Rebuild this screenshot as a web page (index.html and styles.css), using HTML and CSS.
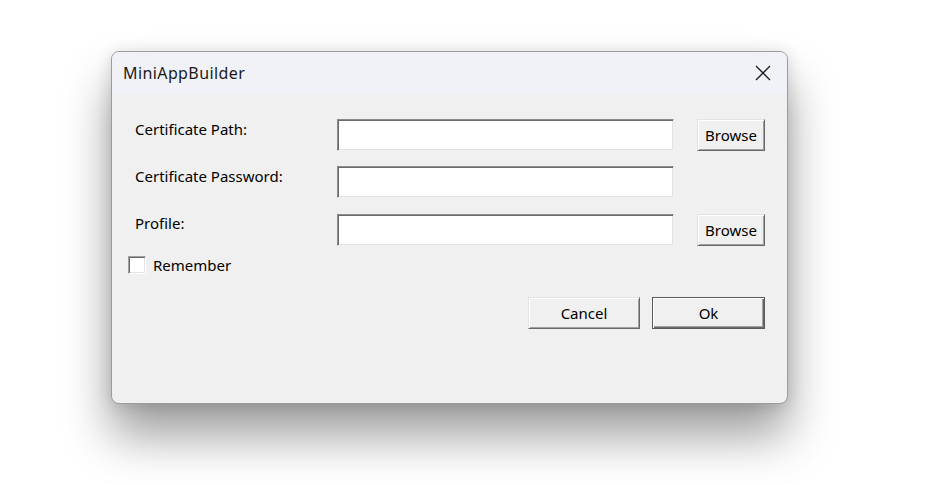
FILE: index.html
```html
<!DOCTYPE html>
<html>
<head>
<meta charset="utf-8">
<title>MiniAppBuilder</title>
<link rel="stylesheet" href="styles.css">
</head>
<body>
<div class="window">
  <div class="titlebar">
    <span class="title">MiniAppBuilder</span>
    <span class="close">
      <svg width="16" height="16" viewBox="0 0 16 16"><path d="M1 1 L15 15 M15 1 L1 15" stroke="#1a1a1a" stroke-width="1.3" fill="none"/></svg>
    </span>
  </div>
  <div class="content">
    <div class="form">
      <label class="lbl">Certificate Path:</label>
      <div class="field"></div>
      <button class="btn">Browse</button>

      <label class="lbl">Certificate Password:</label>
      <div class="field"></div>
      <div></div>

      <label class="lbl">Profile:</label>
      <div class="field third"></div>
      <button class="btn third">Browse</button>
    </div>
    <div class="check-row">
      <span class="checkbox"></span>
      <span class="check-label">Remember</span>
    </div>
    <div class="actions">
      <button class="btn wide">Cancel</button>
      <button class="btn wide default">Ok</button>
    </div>
  </div>
</div>
</body>
</html>
```
FILE: styles.css
```css
html, body {
  margin: 0;
  padding: 0;
  background: #ffffff;
  height: 100%;
}
body {
  box-sizing: border-box;
  font-family: "Noto Sans", "Open Sans", sans-serif;
  font-size: 15px;
  color: #000;
  padding: 51px 0 0 111px;
  overflow: hidden;
}
.window {
  width: 675px;
  height: 351px;
  border: 1px solid #9c9c9c;
  border-radius: 8px;
  background: #f0f0f0;
  overflow: hidden;
  box-shadow: 0 32px 48px rgba(0,0,0,0.38), 0 2px 16px rgba(0,0,0,0.14);
  display: flex;
  flex-direction: column;
}
.titlebar {
  height: 42px;
  background: #f1f2f8;
  display: flex;
  align-items: center;
  justify-content: space-between;
  padding: 0 16px 0 11px;
}
.title {
  font-size: 16px;
  letter-spacing: 0.4px;
  color: #1a1a1a;
}
.close {
  display: flex;
  width: 16px;
  height: 16px;
}
.content {
  padding: 25px 22px 0 16px;
  display: flex;
  flex-direction: column;
}
.form {
  display: grid;
  grid-template-columns: 179px 337px 68px;
  grid-template-rows: 32px 32px 33px;
  column-gap: 23px;
  row-gap: 15px;
  padding-left: 7px;
}
.lbl {
  line-height: 20px;
  align-self: start;
  white-space: nowrap;
}
.field {
  height: 32px;
  background: #fff;
  box-sizing: border-box;
  border-style: solid;
  border-width: 1px;
  border-color: #8a8a8a #f0f0f0 #f0f0f0 #8a8a8a;
  box-shadow: inset 1px 1px 0 #6b6b6b, inset -1px -1px 0 #e3e3e3;
}
.third {
  align-self: end;
}
.btn {
  font-family: inherit;
  font-size: 15px;
  color: #000;
  background: #f0f0f0;
  box-sizing: border-box;
  height: 32px;
  padding: 0;
  border-style: solid;
  border-width: 1px;
  border-color: #e3e3e3 #696969 #696969 #e3e3e3;
  box-shadow: inset 1px 1px 0 #ffffff, inset -1px -1px 0 #a0a0a0;
}
.check-row {
  display: flex;
  align-items: center;
  margin-top: 10px;
  height: 18px;
}
.checkbox {
  width: 18px;
  height: 18px;
  box-sizing: border-box;
  background: #fff;
  border-style: solid;
  border-width: 1px;
  border-color: #a0a0a0 #fff #fff #a0a0a0;
  box-shadow: inset 1px 1px 0 #696969, inset -1px -1px 0 #e3e3e3;
}
.check-label {
  margin-left: 7px;
}
.actions {
  display: flex;
  justify-content: flex-end;
  gap: 12px;
  margin-top: 23px;
}
.wide {
  width: 112px;
}
.default {
  width: 113px;
  border: 1px solid #5a5a5a;
  box-shadow: inset 1px 1px 0 #ffffff, inset -1px -1px 0 #696969, inset -2px -2px 0 #a0a0a0;
}
```
